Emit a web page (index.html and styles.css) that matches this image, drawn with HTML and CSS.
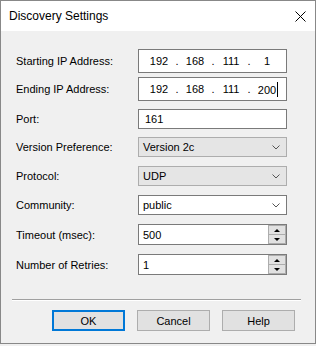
FILE: index.html
```html
<!DOCTYPE html>
<html lang="en">
<head>
  <meta charset="UTF-8" />
  <title>Discovery Settings</title>
  <link rel="stylesheet" href="styles.css">
</head>
<body>
  <div class="window">
    <!-- Title bar -->
    <div class="titlebar">
      <span class="title">Discovery Settings</span>
      <span class="close">
        <svg width="11" height="11" viewBox="0 0 11 11">
          <path d="M0.5 0.5 L10.5 10.5 M10.5 0.5 L0.5 10.5" stroke="#000" stroke-width="1" fill="none" />
        </svg>
      </span>
    </div>

    <div class="dialog-body">
      <div class="row ip-row">
        <label class="lbl">Starting IP Address:</label>
        <div class="ip-box">
          <span class="octet">192</span><span class="dot">.</span>
          <span class="octet">168</span><span class="dot">.</span>
          <span class="octet">111</span><span class="dot">.</span>
          <span class="octet">1</span>
        </div>
      </div>
      <div class="row ip-row second">
        <label class="lbl">Ending IP Address:</label>
        <div class="ip-box">
          <span class="octet">192</span><span class="dot">.</span>
          <span class="octet">168</span><span class="dot">.</span>
          <span class="octet">111</span><span class="dot">.</span>
          <span class="octet">200<span class="caret"></span></span>
        </div>
      </div>
      <div class="row">
        <label class="lbl">Port:</label>
        <div class="field">161</div>
      </div>
      <div class="row">
        <label class="lbl">Version Preference:</label>
        <div class="combo locked">
          <span>Version 2c</span>
          <svg class="chev" width="8" height="5" viewBox="0 0 8 5"><path d="M0.5 0.5 L4 4 L7.5 0.5" stroke="#555" fill="none" /></svg>
        </div>
      </div>
      <div class="row">
        <label class="lbl">Protocol:</label>
        <div class="combo locked">
          <span>UDP</span>
          <svg class="chev" width="8" height="5" viewBox="0 0 8 5"><path d="M0.5 0.5 L4 4 L7.5 0.5" stroke="#555" fill="none" /></svg>
        </div>
      </div>
      <div class="row">
        <label class="lbl">Community:</label>
        <div class="combo">
          <span>public</span>
          <svg class="chev" width="8" height="5" viewBox="0 0 8 5"><path d="M0.5 0.5 L4 4 L7.5 0.5" stroke="#555" fill="none" /></svg>
        </div>
      </div>
      <div class="row tall">
        <label class="lbl">Timeout (msec):</label>
        <div class="spin">
          <div class="spin-text">500</div>
          <div class="spin-btns">
            <span class="sb"><i class="up"></i></span>
            <span class="sb"><i class="down"></i></span>
          </div>
        </div>
      </div>
      <div class="row tall">
        <label class="lbl">Number of Retries:</label>
        <div class="spin">
          <div class="spin-text">1</div>
          <div class="spin-btns">
            <span class="sb"><i class="up"></i></span>
            <span class="sb"><i class="down"></i></span>
          </div>
        </div>
      </div>

      <div class="separator"></div>

      <div class="buttons">
        <button class="btn default">OK</button>
        <button class="btn">Cancel</button>
        <button class="btn">Help</button>
      </div>
    </div>
  </div>
</body>
</html>
```

FILE: styles.css
```css
html, body {
  margin: 0;
  padding: 0;
  background: #f0f0f0;
}

body {
  font-family: "Liberation Sans", Arial, sans-serif;
  font-size: 11px;
  color: #000;
}

.window {
  width: 316px;
  height: 344px;
  box-sizing: border-box;
  border: 1px solid #888;
  background: #f0f0f0;
}

/* Title bar */
.titlebar {
  height: 30px;
  background: #fff;
  display: flex;
  align-items: center;
  justify-content: space-between;
  padding: 0 9px 0 8px;
}

.title {
  font-size: 12px;
}

.close {
  display: flex;
  margin-top: 1px;
}

/* Form */
.dialog-body {
  padding: 18px 0 0 15px;
}

.row {
  display: flex;
  align-items: center;
  height: 20px;
  margin-bottom: 8px;
}

.row.ip-row {
  height: 24px;
  margin-bottom: 4px;
}

.row.ip-row.second {
  margin-bottom: 8px;
}

.row:nth-child(n+4) {
  margin-bottom: 9px;
}

.row.tall {
  height: 21px;
}

.lbl {
  width: 122px;
  flex: none;
}

.ip-box,
.field,
.combo,
.spin {
  width: 149px;
  height: 100%;
  box-sizing: border-box;
  border: 1px solid #7a7a7a;
  background: #fff;
  display: flex;
  align-items: center;
}

.ip-box {
  padding-left: 5px;
}

.octet {
  width: 30px;
  text-align: center;
}

.dot {
  width: 6px;
  text-align: center;
}

.caret {
  display: inline-block;
  width: 1px;
  height: 15px;
  background: #000;
  vertical-align: -3px;
  margin-left: 1px;
  margin-right: -2px;
}

.field {
  padding-left: 6px;
}

.combo {
  justify-content: space-between;
  padding: 0 6px 0 4px;
}

.combo.locked {
  background: #e5e5e5;
  border-color: #adadad;
}

.chev {
  display: block;
}

/* Spinners */
.spin {
  padding-left: 4px;
}

.spin-text {
  flex: 1;
}

.spin-btns {
  width: 18px;
  height: 100%;
  display: flex;
  flex-direction: column;
  border-left: 1px solid #fff;
}

.sb {
  flex: 1;
  background: #e1e1e1;
  border: 1px solid #adadad;
  display: flex;
  align-items: center;
  justify-content: center;
}

.sb + .sb {
  border-top: none;
}

.up,
.down {
  width: 0;
  height: 0;
  border-left: 3px solid transparent;
  border-right: 3px solid transparent;
}

.up {
  border-bottom: 3px solid #000;
}

.down {
  border-top: 3px solid #000;
}

/* Bottom */
.separator {
  width: 289px;
  margin: 24px 0 0 -4px;
  border-top: 1px solid #a0a0a0;
  border-bottom: 1px solid #fff;
}

.buttons {
  display: flex;
  gap: 12px;
  margin: 9px 0 0 36px;
}

.btn {
  width: 73px;
  height: 21px;
  font-family: inherit;
  font-size: 11px;
  color: #000;
  background: #e1e1e1;
  border: 1px solid #adadad;
  padding: 0;
}

.btn.default {
  border: 2px solid #0078d7;
}
```
